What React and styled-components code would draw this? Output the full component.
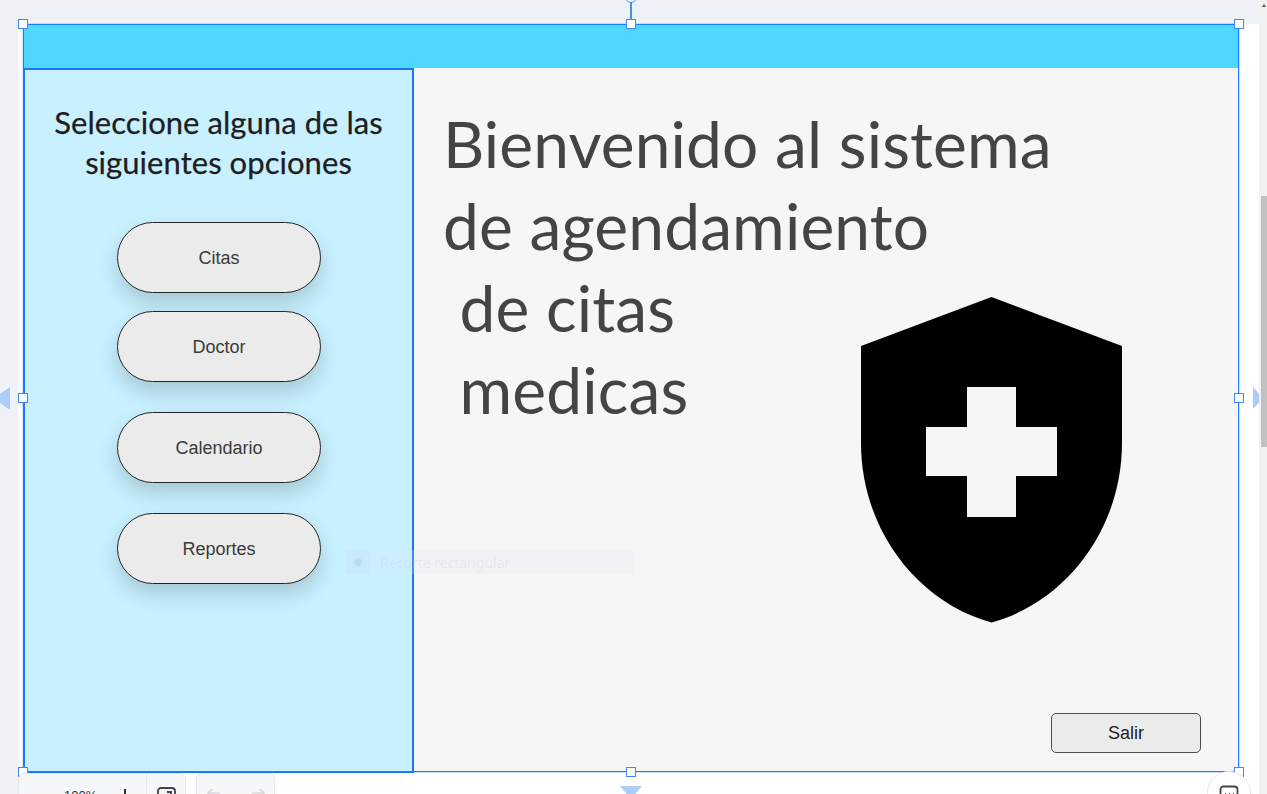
import React from "react";
import styled, { createGlobalStyle } from "styled-components";

const GlobalStyle = createGlobalStyle`
	html,
	body {
		margin: 0;
		padding: 0;
		overflow: hidden;
	}
`;

const handles = [
	["0%", "0%"],
	["50%", "0%"],
	["100%", "0%"],
	["0%", "50%"],
	["100%", "50%"],
	["0%", "100%"],
	["50%", "100%"],
	["100%", "100%"],
];

function Shield() {
	return (
		<ShieldSvg viewBox="0 0 261 326" aria-hidden="true">
			<path
				fillRule="evenodd"
				d="M130.5 0 L261 49 V146 C261 232 205 305 130.5 325.5 C56 305 0 232 0 146 V49 Z M106 90 V130 H65 V179 H106 V220 H155 V179 H196 V130 H155 V90 Z"
			/>
		</ShieldSvg>
	);
}

export default function App() {
	return (
		<Page>
			<GlobalStyle />
			<Workspace>
				<Frame>
					<TopBar />
					<Body>
						<Sidebar>
							<SideTitle>Seleccione alguna de las siguientes opciones</SideTitle>
							<PillList>
								<Pill $tight>Citas</Pill>
								<Pill>Doctor</Pill>
								<Pill>Calendario</Pill>
								<Pill>Reportes</Pill>
							</PillList>
						</Sidebar>
						<Main>
							<Heading>
								Bienvenido al sistema{"\n"}de agendamiento{"\n"} de citas{"\n"} medicas
							</Heading>
							<Shield />
							<ExitButton>Salir</ExitButton>
						</Main>
					</Body>
					<Selection />
					{handles.map(([left, top]) => (
						<Handle key={left + top} style={{ left, top }} />
					))}
					<RotateKnob />
					<GhostTip>
						<GhostIcon>
							<span />
						</GhostIcon>
						Recorte rectangular
					</GhostTip>
				</Frame>
			</Workspace>
			<ArrowLeft />
			<ArrowRight />
			<ArrowDown />
			<ScrollTrack>
				<ScrollUp />
				<ScrollThumb />
			</ScrollTrack>
			<ZoomBar>
				<ZoomText>100%</ZoomText>
				<ZoomPlus />
				<ZoomFit>
					<svg width="20" height="20" viewBox="0 0 20 20" fill="none" stroke="#3d4450" strokeWidth="1.8">
						<rect x="1" y="1" width="17" height="18" rx="3" />
						<path d="M10 5h4v4" />
					</svg>
				</ZoomFit>
			</ZoomBar>
			<HistoryBar>
				<svg width="60" height="16" viewBox="0 0 60 16" fill="none" stroke="#d5d8de" strokeWidth="1.6">
					<path d="M6 2 2 6l4 4M2 6h9a5 5 0 0 1 5 5v4" />
					<path d="M54 2l4 4-4 4M58 6h-9a5 5 0 0 0-5 5v4" />
				</svg>
			</HistoryBar>
			<ChatButton>
				<svg width="20" height="20" viewBox="0 0 20 20" fill="none" stroke="#3d4450" strokeWidth="1.8">
					<rect x="1.5" y="1.5" width="17" height="15" rx="3" />
					<path d="M6 9h1M10 9h1M14 9h1" />
				</svg>
			</ChatButton>
		</Page>
	);
}

const Page = styled.div`
	position: relative;
	width: 1267px;
	height: 794px;
	overflow: hidden;
	background: #ffffff;
`;

const Workspace = styled.div`
	padding: 24px 0 0 23px;
	height: 770px;
	background: linear-gradient(#eef1f6 24px, transparent 24px),
		linear-gradient(90deg, #eef1f6 18px, transparent 18px);
`;

const Frame = styled.div`
	position: relative;
	width: 1216px;
	height: 748px;
	display: flex;
	flex-direction: column;
`;

const TopBar = styled.div`
	height: 44px;
	flex: none;
	background: #4fd8ff;
`;

const Body = styled.div`
	flex: 1;
	display: flex;
	min-height: 0;
`;

const Sidebar = styled.aside`
	width: 391px;
	height: 705px;
	flex: none;
	box-sizing: border-box;
	border: 2px solid #1a75ff;
	background: #c8f0ff;
	display: flex;
	flex-direction: column;
	align-items: center;
`;

const SideTitle = styled.h2`
	margin: 32px 0 0;
	width: 350px;
	font: 400 31px/40px "Lato", "Liberation Sans", sans-serif;
	letter-spacing: 0.05px;
	-webkit-text-stroke: 0.25px #1e1e1e;
	color: #1e1e1e;
	text-align: center;
`;

const PillList = styled.div`
	margin: 40px 0 0 1px;
	display: flex;
	flex-direction: column;
	gap: 30px;
`;

const Pill = styled.button`
	width: 204px;
	height: 71px;
	padding: 2px 0 0;
	margin-bottom: ${(p) => (p.$tight ? "-12px" : "0")};
	border: 1px solid #262626;
	border-radius: 36px;
	background: #ebebeb;
	box-shadow: 0 10px 20px rgba(0, 0, 0, 0.17);
	font: 400 18px "Liberation Sans", Arial, sans-serif;
	color: #3a3a3a;
`;

const Main = styled.main`
	flex: 1;
	min-width: 0;
	display: grid;
	grid-template-rows: 1fr auto;
	padding: 0 37px 19px 29px;
	background: #f6f6f6;
`;

const Heading = styled.h1`
	grid-area: 1 / 1;
	margin: 35px 0 0;
	font: 400 64px/82px "Lato", "Liberation Sans", sans-serif;
	letter-spacing: 0.15px;
	color: #444444;
	white-space: pre-wrap;
`;

const ShieldSvg = styled.svg`
	grid-area: 1 / 1;
	justify-self: end;
	width: 261px;
	height: 326px;
	margin: 229px 80px 0 0;
	fill: #000000;
`;

const ExitButton = styled.button`
	grid-row: 2;
	grid-column: 1;
	justify-self: end;
	width: 150px;
	height: 40px;
	margin-right: 1px;
	padding: 0;
	border: 1.5px solid #4d4d4d;
	border-radius: 5px;
	background: #ebebeb;
	font: 400 18px "Liberation Sans", Arial, sans-serif;
	color: #222222;
`;

const Selection = styled.div`
	position: absolute;
	inset: 0;
	border: 1px solid #1a7dff;
	box-shadow: 0 0 0 1px rgba(26, 125, 255, 0.2);
	pointer-events: none;
`;

const Handle = styled.span`
	position: absolute;
	width: 8px;
	height: 8px;
	transform: translate(-50%, -50%);
	border: 1.5px solid #3f88f5;
	background: #ffffff;
`;

const RotateKnob = styled.span`
	position: absolute;
	left: 50%;
	top: -33px;
	width: 10px;
	height: 10px;
	transform: translateX(-50%);
	border: 1.5px solid #4a8ff0;
	border-radius: 50%;
	background: #ffffff;

	&::after {
		content: "";
		position: absolute;
		left: 4px;
		top: 10px;
		width: 2px;
		height: 17px;
		background: #4a8ff0;
	}
`;

const GhostTip = styled.div`
	position: absolute;
	left: 323px;
	top: 526px;
	width: 287px;
	height: 24px;
	display: flex;
	align-items: center;
	gap: 10px;
	background: rgba(225, 232, 250, 0.2);
	font: 400 14px "Noto Sans", sans-serif;
	color: rgba(190, 195, 205, 0.22);
`;

const GhostIcon = styled.span`
	width: 24px;
	height: 24px;
	display: grid;
	place-items: center;
	background: rgba(180, 215, 240, 0.18);

	span {
		width: 8px;
		height: 8px;
		border-radius: 50%;
		background: rgba(120, 170, 200, 0.18);
	}
`;

const ArrowLeft = styled.span`
	position: absolute;
	left: 0;
	top: 387px;
	width: 10px;
	height: 23px;
	background: #abcdf7;
	clip-path: polygon(100% 0, 100% 100%, 0 70%, 0 30%);
`;

const ArrowRight = styled.span`
	position: absolute;
	left: 1253px;
	top: 387px;
	width: 6px;
	height: 22px;
	background: #abcdf7;
	clip-path: polygon(0 0, 100% 30%, 100% 70%, 0 100%);
`;

const ArrowDown = styled.span`
	position: absolute;
	left: 620px;
	top: 786px;
	width: 22px;
	height: 8px;
	background: #abcdf7;
	clip-path: polygon(0 0, 100% 0, 70% 100%, 30% 100%);
`;

const ScrollTrack = styled.div`
	position: absolute;
	right: 0;
	top: 0;
	width: 8px;
	height: 794px;
	background: #f1f1f1;
`;

const ScrollUp = styled.div`
	position: absolute;
	left: 3px;
	top: 4px;
	width: 4px;
	height: 3px;
	background: #505050;
	clip-path: polygon(50% 0, 100% 100%, 0 100%);
`;

const ScrollThumb = styled.div`
	margin: 196px 0 0 2px;
	width: 6px;
	height: 251px;
	background: #c1c1c1;
`;

const ZoomBar = styled.div`
	position: absolute;
	left: 18px;
	top: 773px;
	width: 168px;
	height: 40px;
	display: flex;
	box-sizing: border-box;
	border: 1px solid #e6e8ec;
	border-radius: 6px;
	background: #f6f7f9;
`;

const ZoomText = styled.span`
	margin: 14px 0 0 45px;
	font: 400 13px "Liberation Sans", Arial, sans-serif;
	color: #333333;
`;

const ZoomPlus = styled.span`
	margin: 15px 0 0 27px;
	width: 1.5px;
	height: 14px;
	background: #333333;
`;

const ZoomFit = styled.span`
	margin-left: 20px;
	padding: 13px 0 0 10px;
	border-left: 1px solid #e6e8ec;
`;

const HistoryBar = styled.div`
	position: absolute;
	left: 196px;
	top: 773px;
	width: 79px;
	height: 40px;
	box-sizing: border-box;
	padding: 13px 0 0 9px;
	border: 1px solid #e6e8ec;
	border-radius: 6px;
	background: #f6f7f9;
`;

const ChatButton = styled.div`
	position: absolute;
	left: 1207px;
	top: 771px;
	width: 44px;
	height: 44px;
	box-sizing: border-box;
	padding: 13px 0 0 11px;
	border: 1px solid #e6e8ec;
	border-radius: 50%;
	background: #ffffff;
`;
